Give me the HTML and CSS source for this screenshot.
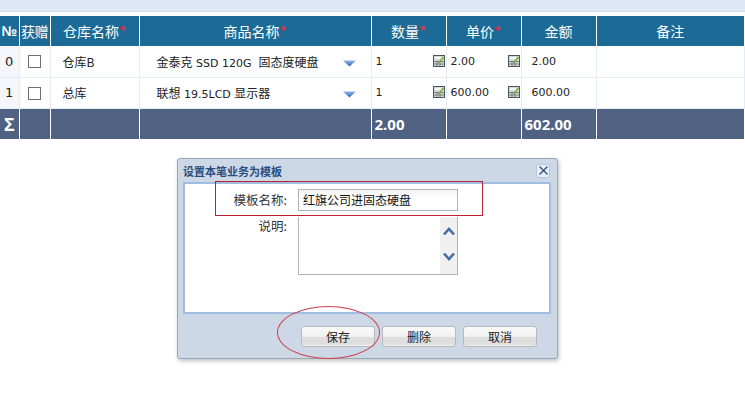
FILE: index.html
```html
<!DOCTYPE html>
<html lang="zh-CN">
<head>
    <meta charset="UTF-8">
    <title>设置本笔业务为模板</title>
    <link rel="stylesheet" href="styles.css">
</head>
<body>
    <svg class="icon-defs" width="0" height="0">
        <defs>
            <linearGradient id="arrow-fill" x1="0" y1="0" x2="0" y2="1">
                <stop offset="0" stop-color="#8fb4ea"/>
                <stop offset="1" stop-color="#2f62b4"/>
            </linearGradient>
            <symbol id="arrow" viewBox="0 0 13 7">
                <path d="M0 0.5H13L6.5 6.5Z" fill="url(#arrow-fill)"/>
            </symbol>
            <symbol id="calc" viewBox="0 0 12 12">
                <rect x="0.5" y="0.5" width="11" height="11" fill="#d3dadc" stroke="#4a565b"/>
                <rect x="2" y="2" width="6" height="2" fill="#f4f6f6"/>
                <path d="M1 6.5H11M1 9H11M4 6V11M7 6V11" stroke="#5d6a6f" stroke-width="0.8"/>
                <path d="M5.5 8L10.5 2" stroke="#7fb02e" stroke-width="1.6"/>
            </symbol>
        </defs>
    </svg>

    <div class="top-band"></div>

    <table class="grid">
        <colgroup>
            <col class="col-no"><col class="col-gift"><col class="col-store"><col class="col-goods">
            <col class="col-num"><col class="col-num"><col class="col-num"><col>
        </colgroup>
        <thead>
            <tr>
                <th>№</th>
                <th>获赠</th>
                <th>仓库名称<span class="req">*</span></th>
                <th>商品名称<span class="req">*</span></th>
                <th>数量<span class="req">*</span></th>
                <th>单价<span class="req">*</span></th>
                <th>金额</th>
                <th>备注</th>
            </tr>
        </thead>
        <tbody>
            <tr>
                <td class="row-no">0</td>
                <td class="center"><span class="check"></span></td>
                <td class="store">仓库B</td>
                <td class="goods"><span><span class="cn">金泰克</span> SSD 120G&nbsp; <span class="cn">固态度硬盘</span></span><svg class="arrow"><use href="#arrow"/></svg></td>
                <td class="num"><span>1</span><svg class="calc"><use href="#calc"/></svg></td>
                <td class="num"><span>2.00</span><svg class="calc"><use href="#calc"/></svg></td>
                <td class="amount">2.00</td>
                <td></td>
            </tr>
            <tr>
                <td class="row-no">1</td>
                <td class="center"><span class="check"></span></td>
                <td class="store">总库</td>
                <td class="goods"><span><span class="cn">联想</span> 19.5LCD <span class="cn">显示器</span></span><svg class="arrow"><use href="#arrow"/></svg></td>
                <td class="num"><span>1</span><svg class="calc"><use href="#calc"/></svg></td>
                <td class="num"><span>600.00</span><svg class="calc"><use href="#calc"/></svg></td>
                <td class="amount">600.00</td>
                <td></td>
            </tr>
        </tbody>
        <tfoot>
            <tr>
                <td class="sigma">Σ</td>
                <td></td>
                <td></td>
                <td></td>
                <td>2.00</td>
                <td></td>
                <td>602.00</td>
                <td></td>
            </tr>
        </tfoot>
    </table>

    <div class="dialog">
        <div class="dialog-title">
            <span>设置本笔业务为模板</span>
            <span class="dialog-close">
                <svg width="9" height="9" viewBox="0 0 9 9"><path d="M0.5 0.5L8.5 8.5M8.5 0.5L0.5 8.5" stroke="#2d4f80" stroke-width="1.3"/></svg>
            </span>
        </div>
        <div class="dialog-body">
            <div class="field field-middle">
                <label>模板名称:</label>
                <div class="text-input">红旗公司进固态硬盘</div>
            </div>
            <div class="field">
                <label>说明:</label>
                <div class="text-area">
                    <div class="spinner">
                        <svg width="12" height="9" viewBox="0 0 12 9"><path d="M1 7.5L6 2L11 7.5" fill="none" stroke="#44709f" stroke-width="2.6"/></svg>
                        <svg width="12" height="9" viewBox="0 0 12 9"><path d="M1 1.5L6 7L11 1.5" fill="none" stroke="#44709f" stroke-width="2.6"/></svg>
                    </div>
                </div>
            </div>
        </div>
        <div class="dialog-buttons">
            <button type="button" class="btn">保存</button>
            <button type="button" class="btn">删除</button>
            <button type="button" class="btn">取消</button>
        </div>
    </div>

    <div class="mark-rect"></div>
    <div class="mark-ellipse"></div>
</body>
</html>
```

FILE: styles.css
```css
* {
    box-sizing: border-box;
}
body {
    margin: 0;
    height: 408px;
    overflow: hidden;
    position: relative;
    background: #fff;
    color: #222;
    font-family: "DejaVu Sans", "Noto Sans CJK SC", sans-serif;
    font-size: 11px;
}
.icon-defs {
    position: absolute;
}
.top-band {
    height: 12px;
    background: #dfe7f6;
    border-bottom: 1px solid #d3dcea;
    margin-bottom: 4px;
}

/* table */
.grid {
    width: 745px;
    table-layout: fixed;
    border-collapse: collapse;
}
.col-no { width: 19px; }
.col-gift { width: 31px; }
.col-store { width: 89px; }
.col-goods { width: 232px; }
.col-num { width: 75px; }
.grid th {
    height: 30px;
    padding: 0;
    background: #1b6b96;
    color: #fff;
    font-family: "Noto Sans CJK SC", sans-serif;
    font-size: 14px;
    font-weight: normal;
    border-right: 1px solid #fff;
}
.grid th:first-child {
    font-family: "Liberation Sans", sans-serif;
    font-size: 14px;
    font-weight: bold;
}
.grid th:nth-child(2) {
    letter-spacing: -0.5px;
}
.req {
    color: #d0364f;
    font-weight: bold;
}
.cn {
    font-family: "Noto Sans CJK SC", sans-serif;
    font-size: 12px;
}
.grid td {
    padding: 0;
    border-right: 1px solid #e6ebf4;
    border-bottom: 1px solid #e6ebf4;
}
.grid tbody td {
    height: 31px;
}
.row-no {
    text-align: center;
    font-size: 13px;
    background: #f4f6fb;
}
.center {
    text-align: center;
}
.check {
    display: inline-block;
    width: 13px;
    height: 13px;
    margin-top: 4px;
    border: 1px solid #6f6f6f;
    background: #fff;
}
.store {
    padding-left: 12px !important;
    font-family: "Noto Sans CJK SC", sans-serif;
    font-size: 12px;
}
.goods,
.num {
    white-space: nowrap;
}
.goods > span {
    float: left;
    margin: 0 0 0 17px;
    font-size: 11px;
}
.arrow {
    float: right;
    width: 13px;
    height: 7px;
    margin: 7px 15px 0 0;
}
.num span {
    float: left;
    margin-left: 4px;
}
.calc {
    float: right;
    width: 12px;
    height: 12px;
    margin: 0 1px 0 0;
}
.amount {
    padding-left: 10px !important;
}
.grid tfoot td {
    height: 31px;
    padding-left: 3px;
    background: #4f6282;
    color: #fff;
    font-family: "Open Sans", sans-serif;
    font-size: 15px;
    font-weight: bold;
    border-right: 1px solid #fff;
    border-bottom: 0;
}
.grid tfoot .sigma {
    padding-left: 0;
    text-align: center;
    font-size: 18px;
}

/* dialog */
.dialog {
    position: absolute;
    left: 177px;
    top: 158px;
    width: 381px;
    height: 201px;
    display: flex;
    flex-direction: column;
    padding: 0 6px 0 5px;
    background: #cdd8e7;
    border: 1px solid #9aa7b8;
    border-radius: 3px;
    box-shadow: 1px 2px 4px rgba(0, 0, 0, 0.25);
}
.dialog-title {
    height: 23px;
    display: flex;
    align-items: center;
    justify-content: space-between;
    color: #2a4d80;
    font-family: "Noto Sans CJK SC", sans-serif;
    font-size: 11px;
    font-weight: bold;
}
.dialog-close {
    width: 14px;
    height: 14px;
    margin-right: 1px;
    display: flex;
    align-items: center;
    justify-content: center;
    background: #e9eff7;
    border: 1px solid #b4c4da;
    border-radius: 2px;
}
.dialog-body {
    height: 132px;
    padding-top: 5px;
    background: #fff;
    border: 2px solid #a2bde2;
}
.field {
    display: flex;
    align-items: flex-start;
    margin-bottom: 6px;
}
.field-middle {
    align-items: center;
}
.field label {
    width: 102px;
    line-height: 18px;
    text-align: right;
    font-family: "Noto Sans CJK SC", sans-serif;
    font-size: 12.5px;
    color: #333;
}
.text-input {
    width: 160px;
    height: 22px;
    margin-left: 11px;
    padding-left: 4px;
    line-height: 20px;
    border: 1px solid #b3b3b3;
    background: linear-gradient(#f1f3f3, #fff 40%);
    font-family: "Noto Sans CJK SC", sans-serif;
    font-size: 12px;
    color: #111;
}
.text-area {
    width: 160px;
    height: 58px;
    margin-left: 11px;
    display: flex;
    justify-content: flex-end;
    border: 1px solid #b3b3b3;
    border-top: 0;
    background: #fff;
}
.spinner {
    width: 17px;
    padding-top: 10px;
    display: flex;
    flex-direction: column;
    align-items: center;
    gap: 16px;
    background: #f0f0f0;
}
.dialog-buttons {
    display: flex;
    justify-content: flex-end;
    gap: 7px;
    padding: 12px 14px 0 0;
}
.btn {
    width: 74px;
    height: 21px;
    padding: 0;
    border: 1px solid #b9b9b9;
    border-radius: 3px;
    background: linear-gradient(#fafafa 0, #f1f1f1 50%, #dedede 50%, #dedede 90%, #f4f4f4 100%);
    color: #222;
    font-family: "Noto Sans CJK SC", sans-serif;
    font-size: 12px;
}

/* annotations drawn over the screenshot */
.mark-rect {
    position: absolute;
    left: 215px;
    top: 181px;
    width: 268px;
    height: 35px;
    border: 1px solid #b8222e;
}
.mark-ellipse {
    position: absolute;
    left: 277px;
    top: 306px;
    width: 103px;
    height: 53px;
    border: 1px solid #c9434f;
    border-radius: 50%;
}
```
